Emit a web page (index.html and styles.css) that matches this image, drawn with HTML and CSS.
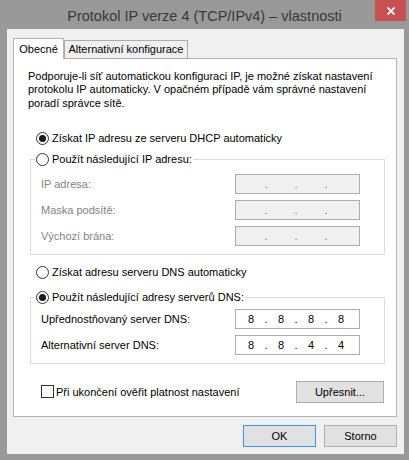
FILE: index.html
```html
<!DOCTYPE html>
<html lang="cs">
<head>
<meta charset="utf-8">
<title>Protokol IP verze 4 (TCP/IPv4) – vlastnosti</title>
<link rel="stylesheet" href="styles.css">
</head>
<body>
<div class="window">
  <div class="titlebar"><span class="title">Protokol IP verze 4 (TCP/IPv4) – vlastnosti</span></div>
  <button class="close" aria-label="Zavřít"><svg width="8" height="8" viewBox="0 0 8 8"><path d="M0.5 0.5 L7.5 7.5 M7.5 0.5 L0.5 7.5" stroke="#fff" stroke-width="1.8" fill="none"/></svg></button>
  <div class="client">
    <div class="tabs">
      <div class="tab active">Obecné</div>
      <div class="tab">Alternativní konfigurace</div>
    </div>
    <div class="panel">
      <p class="intro">Podporuje-li síť automatickou konfiguraci IP, je možné získat nastavení<br>protokolu IP automaticky. V opačném případě vám správné nastavení<br>poradí správce sítě.</p>
      <label class="radio top1"><span class="rb checked"></span>Získat IP adresu ze serveru DHCP automaticky</label>
      <fieldset class="group g1">
        <legend><label class="radio"><span class="rb"></span>Použít následující IP adresu:</label></legend>
        <div class="rows disabled r1">
          <span class="lbl">IP adresa:</span>
          <span class="ip"><span class="seg"></span><span class="dot">.</span><span class="seg"></span><span class="dot">.</span><span class="seg"></span><span class="dot">.</span><span class="seg"></span></span>
          <span class="lbl">Maska podsítě:</span>
          <span class="ip"><span class="seg"></span><span class="dot">.</span><span class="seg"></span><span class="dot">.</span><span class="seg"></span><span class="dot">.</span><span class="seg"></span></span>
          <span class="lbl">Výchozí brána:</span>
          <span class="ip"><span class="seg"></span><span class="dot">.</span><span class="seg"></span><span class="dot">.</span><span class="seg"></span><span class="dot">.</span><span class="seg"></span></span>
        </div>
      </fieldset>
      <label class="radio top3"><span class="rb"></span>Získat adresu serveru DNS automaticky</label>
      <fieldset class="group g2">
        <legend><label class="radio"><span class="rb checked"></span>Použít následující adresy serverů DNS:</label></legend>
        <div class="rows r2">
          <span class="lbl">Upřednostňovaný server DNS:</span>
          <span class="ip"><span class="seg">8</span><span class="dot">.</span><span class="seg">8</span><span class="dot">.</span><span class="seg">8</span><span class="dot">.</span><span class="seg">8</span></span>
          <span class="lbl">Alternativní server DNS:</span>
          <span class="ip"><span class="seg">8</span><span class="dot">.</span><span class="seg">8</span><span class="dot">.</span><span class="seg">4</span><span class="dot">.</span><span class="seg">4</span></span>
        </div>
      </fieldset>
      <div class="footer">
        <label class="check"><span class="cb"></span>Při ukončení ověřit platnost nastavení</label>
        <button class="btn adv">Upřesnit...</button>
      </div>
    </div>
    <div class="actions">
      <button class="btn default">OK</button>
      <button class="btn">Storno</button>
    </div>
  </div>
</div>
</body>
</html>
```

FILE: styles.css
```css
html, body {
  margin: 0;
  padding: 0;
  background: #999999;
}
body {
  font-family: "Liberation Sans", Arial, sans-serif;
  font-size: 11px;
  color: #000;
}
.window {
  width: 409px;
  height: 460px;
  position: relative;
  background: #999999;
  overflow: hidden;
}
.titlebar {
  height: 29px;
  box-sizing: border-box;
  padding-top: 6px;
  display: flex;
  justify-content: center;
}
.title {
  font-size: 14.5px;
  line-height: 20px;
  color: #383838;
  white-space: nowrap;
}
.close {
  position: absolute;
  top: 0;
  left: 375px;
  width: 31px;
  height: 21px;
  padding: 0;
  border: 0;
  background: #c75050;
  display: flex;
  align-items: center;
  justify-content: center;
}
.client {
  margin-left: 7px;
  width: 397px;
  height: 425px;
  box-sizing: border-box;
  padding: 9px 7px 7px 6px;
  background: #f0f0f0;
  display: flex;
  flex-direction: column;
}
.tabs {
  display: flex;
  align-items: flex-end;
  margin-bottom: -1px;
  position: relative;
  z-index: 1;
  height: 21px;
}
.tab {
  box-sizing: border-box;
  height: 19px;
  width: 124px;
  border: 1px solid #acacac;
  background: #f0f0f0;
  display: flex;
  align-items: center;
  justify-content: center;
  white-space: nowrap;
  padding-bottom: 1px;
}
.tab.active {
  width: 51px;
  height: 21px;
  border-color: #b4b4b4;
  border-bottom: 0;
  background: #fff;
  padding-bottom: 1px;
}
.panel {
  flex: none;
  height: 359px;
  box-sizing: border-box;
  border: 1px solid #b4b4b4;
  background: #fff;
  padding-top: 11px;
  display: flex;
  flex-direction: column;
}
.intro {
  margin: 0 0 0 14px;
  line-height: 13.3px;
  white-space: nowrap;
}
.radio {
  display: flex;
  align-items: center;
  height: 15px;
  line-height: 15px;
  white-space: nowrap;
}
.top1 {
  margin: 21px 0 0 22px;
}
.top3 {
  margin: 10px 0 0 22px;
}
.rb {
  width: 13px;
  height: 13px;
  box-sizing: border-box;
  border: 1px solid #333;
  border-radius: 50%;
  background: #fff;
  margin-right: 3px;
  display: flex;
  align-items: center;
  justify-content: center;
  flex: none;
}
.rb.checked::after {
  content: "";
  width: 7px;
  height: 7px;
  border-radius: 50%;
  background: #1a1a1a;
}
.group {
  margin: 0 0 0 16px;
  width: 355px;
  box-sizing: border-box;
  border: 1px solid #dcdcdc;
  padding: 0;
  min-width: 0;
}
.g1 { margin-top: 6px; }
.g2 { margin-top: 10px; }
.group legend {
  padding: 0 1px;
  margin-left: 4px;
}
.rows {
  display: grid;
  grid-template-columns: 1fr 125px;
  row-gap: 6px;
  align-items: center;
  padding: 7px 24px 8px 10px;
}
.r2 {
  padding-top: 4px;
}
.lbl {
  white-space: nowrap;
}
.ip {
  height: 20px;
  box-sizing: border-box;
  border: 1px solid #abadb3;
  background: #fff;
  display: flex;
  align-items: center;
  padding-left: 3px;
}
.seg {
  width: 24px;
  text-align: center;
}
.dot {
  width: 6px;
  text-align: center;
}
.disabled .lbl {
  color: #838383;
}
.disabled .ip {
  background: #f0f0f0;
  border-color: #adadad;
  color: #6d6d8d;
}
.footer {
  margin: 17px 12px 0 27px;
  display: flex;
  align-items: center;
  justify-content: space-between;
}
.check {
  display: flex;
  align-items: center;
  white-space: nowrap;
}
.cb {
  width: 13px;
  height: 13px;
  box-sizing: border-box;
  border: 1px solid #333;
  background: #fff;
  margin-right: 2px;
}
.btn {
  font-family: inherit;
  font-size: 11px;
  color: #000;
  height: 22px;
  width: 73px;
  box-sizing: border-box;
  border: 1px solid #adadad;
  background: #e1e1e1;
  padding: 0;
}
.btn.adv {
  width: 88px;
}
.btn.default {
  border-color: #3399ff;
}
.actions {
  margin-top: 8px;
  display: flex;
  justify-content: flex-end;
  gap: 8px;
}
```
